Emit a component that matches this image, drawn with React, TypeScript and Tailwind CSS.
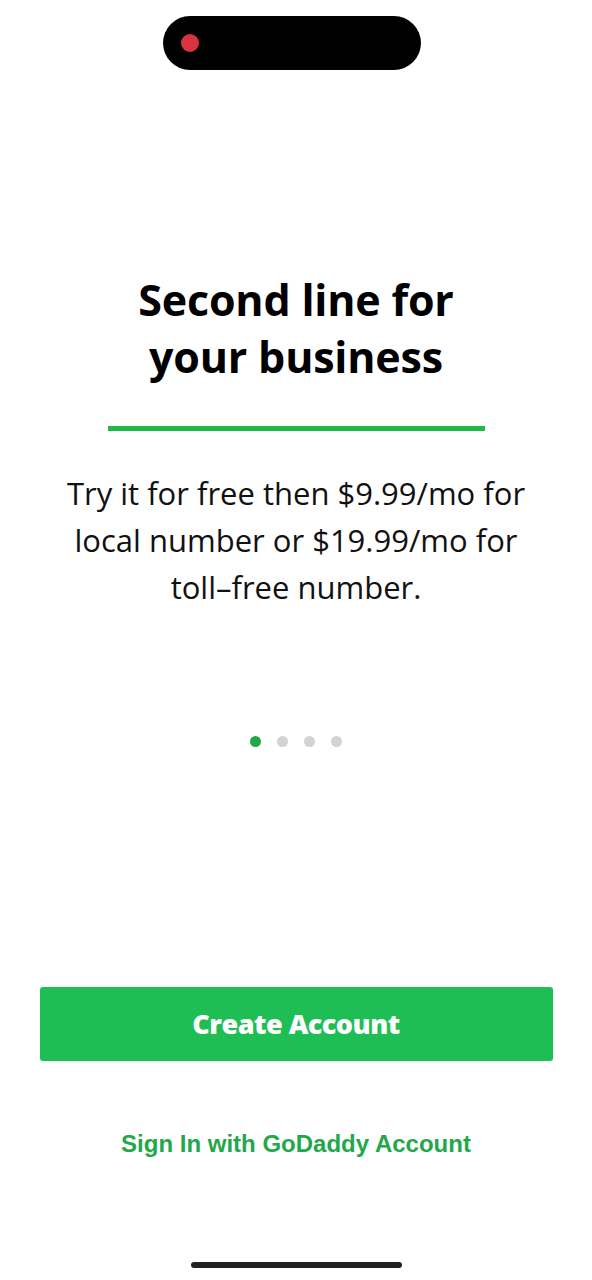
export default function App() {
  const dots = [true, false, false, false];
  return (
    <div className="flex h-[1280px] w-[592px] flex-col items-center bg-white font-['Open_Sans',sans-serif] text-black">
      <div className="mt-4 ml-[-8px] flex h-[54px] w-[258px] items-center rounded-full bg-black pl-[18px]">
        <span className="h-[18px] w-[18px] rounded-full bg-[#d9333f]" />
      </div>

      <h1 className="mt-[201px] text-center text-[43px] leading-[57px] font-bold tracking-[-0.2px]">
        Second line for
        <br />
        your business
      </h1>
      <div className="mt-[41px] h-[5px] w-[377px] bg-[#1fb84a]" />

      <p className="mt-[39px] text-center text-[31px] leading-[47px] text-[#111]">
        Try it for free then $9.99/mo for
        <br />
        local number or $19.99/mo for
        <br />
        toll–free number.
      </p>

      <div className="mt-[125px] flex gap-[16px]">
        {dots.map((on, i) => (
          <span key={i} className={on ? "h-[11px] w-[11px] rounded-full bg-[#1fa845]" : "h-[11px] w-[11px] rounded-full bg-[#d3d3d3]"} />
        ))}
      </div>

      <div className="flex-1" />

      <button className="h-[74px] w-[513px] rounded-[3px] bg-[#1ebe55] text-[27px] font-extrabold tracking-[-0.5px] text-white">
        Create Account
      </button>
      <a className="mt-[65px] font-['Liberation_Sans',sans-serif] text-[24px] font-bold text-[#22a84a]">
        Sign In with GoDaddy Account
      </a>

      <div className="mt-[100px] mb-[12px] h-[6px] w-[211px] rounded-full bg-[#222]" />
    </div>
  );
}
